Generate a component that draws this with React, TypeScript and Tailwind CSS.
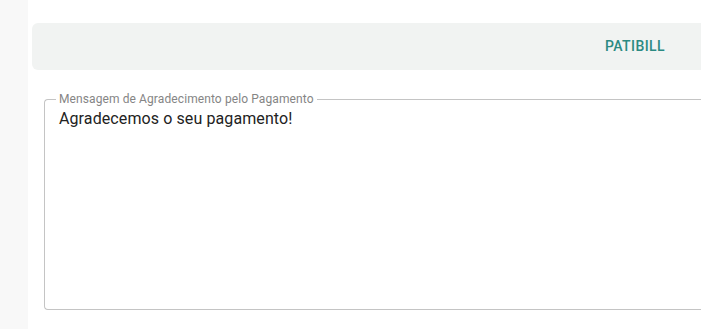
import React from 'react'

const App = () => {
  return (
    <div className="flex w-[701px] h-[329px] overflow-hidden bg-white" style={{ fontFamily: 'Roboto, "Liberation Sans", sans-serif' }}>
      <div className="w-[28px] shrink-0 bg-[#f8f8f8]" />
      <div className="flex-1 min-w-0 pl-1 pt-[23px]">
        <div className="h-[47px] w-[700px] rounded-l-[6px] bg-[#f1f3f2] flex items-center pl-[573px]">
          <span className="text-[14px] font-medium tracking-[0.4px] text-[#2b8a82] uppercase">Patibill</span>
        </div>
        <fieldset className="mt-[22px] ml-3 w-[700px] h-[218px] rounded-l-[4px] border border-r-0 border-[#c4c4c4] pl-[14px]">
          <legend className="-ml-[3px] px-[3px] text-[12px] leading-[14px] tracking-[0.1px] text-[#858585]">Mensagem de Agradecimento pelo Pagamento</legend>
          <div className="pt-[3px] text-[16px] leading-[20px] tracking-[0.1px] text-[#222]">Agradecemos o seu pagamento!</div>
        </fieldset>
      </div>
    </div>
  )
}

export default App
